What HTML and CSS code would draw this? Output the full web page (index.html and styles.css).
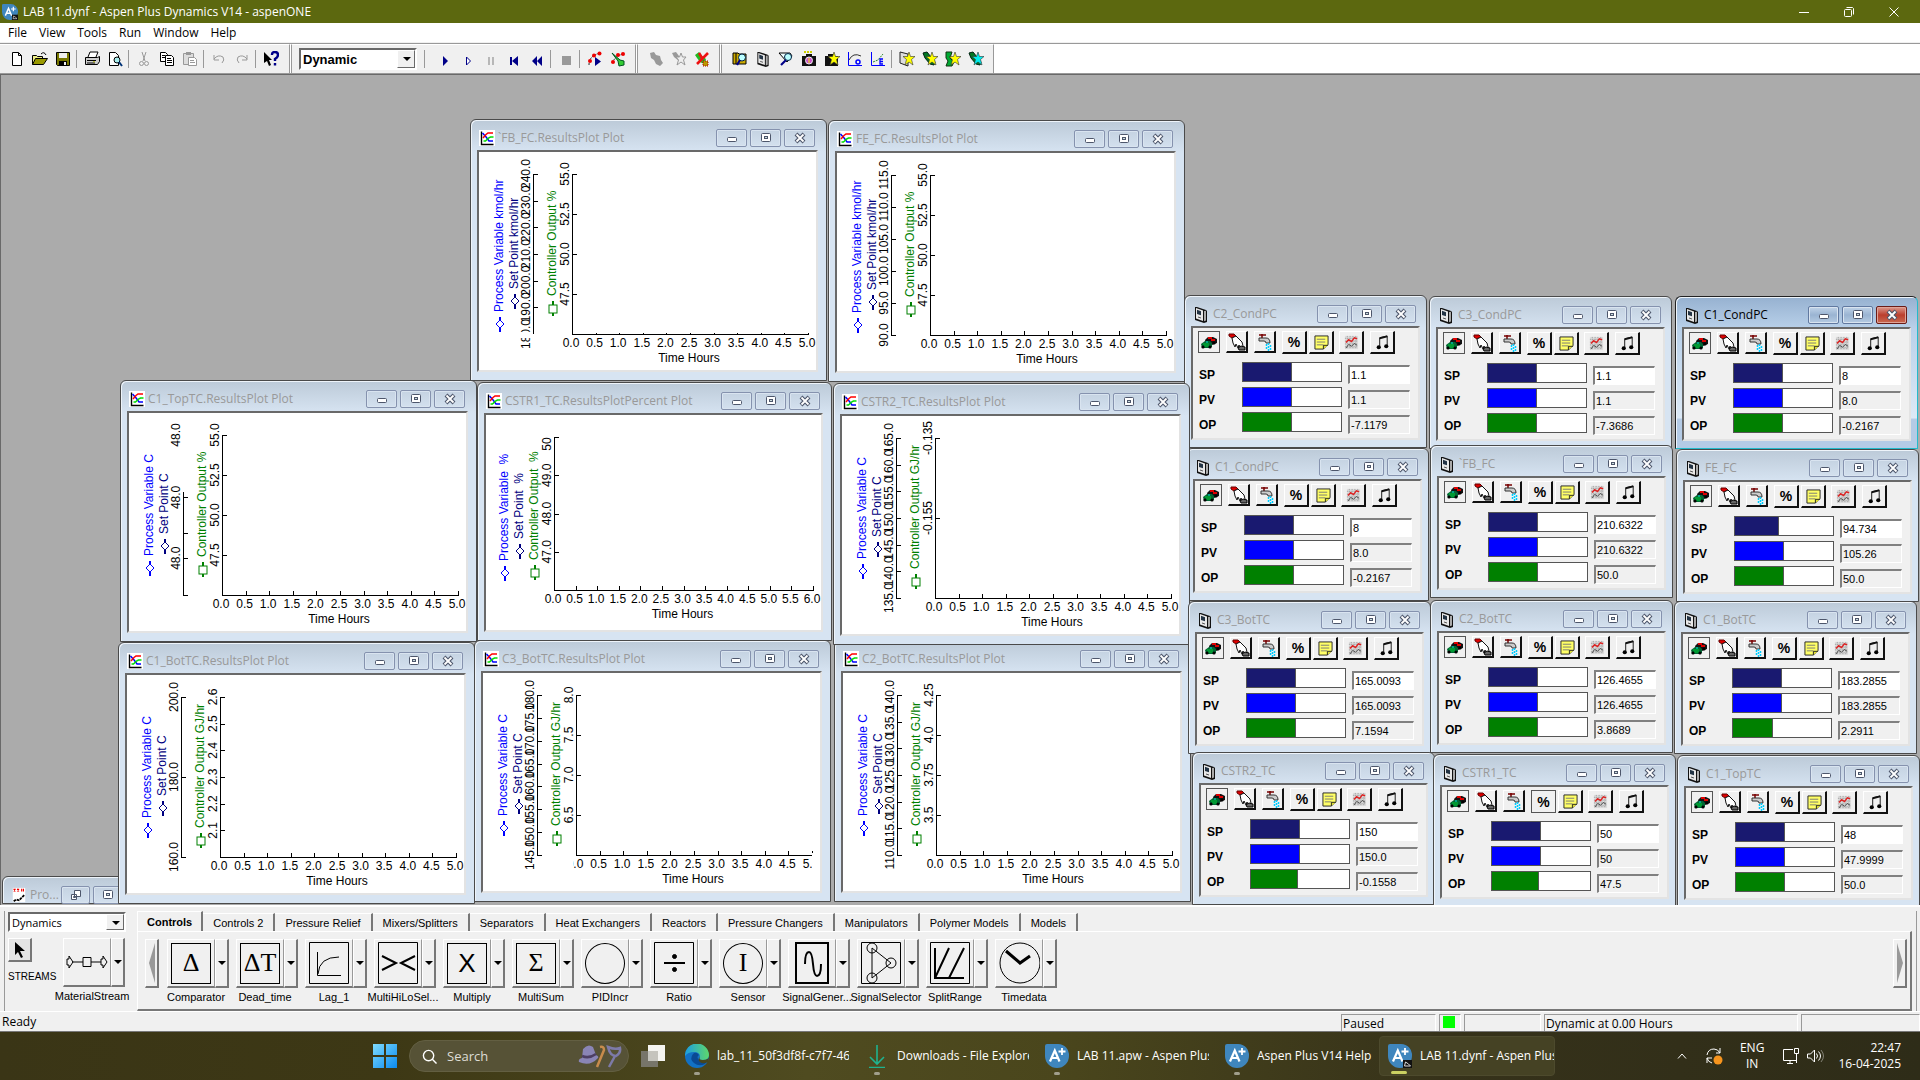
FILE: index.html
```html
<!DOCTYPE html>
<html lang="en">
<head>
<meta charset="utf-8">
<title>LAB 11.dynf - Aspen Plus Dynamics V14 - aspenONE</title>
<link rel="stylesheet" href="styles.css">
</head>
<body>
<svg class="defs" aria-hidden="true">
  <symbol id="aspen" viewBox="0 0 24 24"><path d="M2 0h11a11 11 0 0 1 11 12a12 12 0 0 1-12 12A12 12 0 0 1 0 12V2a2 2 0 0 1 2-2z" fill="#3f86bd"/><path d="M5 17.500L9.800 6.500L14.500 17.500M6.800 14h6" fill="none" stroke="#fff" stroke-width="2.200"/><path d="M17 4v7M13.500 7.500h7" stroke="#fff" stroke-width="1.800"/></symbol>
  <symbol id="aspen-dyn" viewBox="0 0 24 24"><use href="#aspen"/><path d="M15 16h9v8h-9z" fill="#111"/><path d="M16.500 22l1-4 3 2 2 2z" fill="#111" stroke="#ddd"/></symbol>
  <symbol id="plot" viewBox="0 0 16 16"><path d="M0 0h16v16H0z" fill="#fff"/><path d="M2.500 1.500v13H14.500" fill="none" stroke="#000" stroke-width="1.400"/><path d="M3.500 3l4 4.500 2.500 3.500h4" fill="none" stroke="#00f" stroke-width="1.500"/><path d="M4 8l3-3.500 2-1.500h5" fill="none" stroke="#f00" stroke-width="1.500"/><path d="M4.500 11h2l3-3 2-1h3" fill="none" stroke="#0d0" stroke-width="1.500"/></symbol>
  <symbol id="face" viewBox="0 0 14 17"><path d="M1 1h2l9 3 1 1v11l-3 1-9-3z" fill="#111"/><path d="M2 2l7 2.500V15L2 12.500z" fill="#e8e8e8"/><path d="M10 5l2-.3V14.500l-2 .8z" fill="#aaa"/><path d="M3 3.800l4 1.400v4L3 8z" fill="#234"/><path d="M4 11l3 1" stroke="#555"/></symbol>
  <symbol id="text" viewBox="0 0 16 18"><path d="M1 1h14v16H1z" fill="#fff"/><path d="M2 2l2 3M4 2L2 5M6 2l2 3M8 2L6 5M11 2v3M13 2v3" stroke="#e00" stroke-width="1.300"/><path d="M2 16l3-2 3 1 6-6" fill="none" stroke="#000" stroke-width="2" stroke-dasharray="3 1"/></symbol>
  <symbol id="min" viewBox="0 0 12 12"><rect x="1.500" y="5.500" width="9" height="4" rx="1" fill="#fff" stroke="#4d566b"/></symbol>
  <symbol id="max" viewBox="0 0 12 12"><rect x="1.500" y="1.500" width="9" height="8" rx="1" fill="#fff" stroke="#4d566b"/><rect x="4.500" y="4.500" width="3" height="2" fill="#cdd" stroke="#4d566b"/></symbol>
  <symbol id="close" viewBox="0 0 12 12"><path d="M2 2l8 8M10 2l-8 8" stroke="#4d566b" stroke-width="4"/><path d="M2.500 2.500l7 7M9.500 2.500l-7 7" stroke="#fff" stroke-width="1.800"/></symbol>
  <symbol id="restore" viewBox="0 0 12 12"><path d="M4.500 1.500h6v6h-6zM1.500 5.500h5v5h-5z" fill="#fff" stroke="#4d566b"/><path d="M3.500 7.500h2v1h-2z" stroke="#4d566b" fill="none"/></symbol>

  <symbol id="car" viewBox="0 0 18 14"><path d="M5 5l3-3h5l4 2v4l-5 2-6-1z" fill="#111"/><path d="M8 3h4M11 5h4" stroke="#d00" stroke-width="2"/><path d="M1 9l4-3h5l2 2v4l-3 1H2z" fill="#063"/><path d="M3 9h6M4 11h5" stroke="#0a3" stroke-width="1.500"/><circle cx="3" cy="12" r="1.600"/><circle cx="10" cy="12" r="1.600"/><circle cx="14" cy="8" r="1.600"/><path d="M6 7h2" stroke="#0dd"/></symbol>
  <symbol id="hand" viewBox="0 0 18 18"><path d="M1 1h5l2 2-4 2-3-2z" fill="#d00" stroke="#600"/><path d="M4 5l4-2 6 6 1 4-2 3-2-4-1 3-2-4-1 3-2-4z" fill="#fff" stroke="#111"/><path d="M10 15l3-2 4 1v3h-6z" fill="#666" stroke="#000"/></symbol>
  <symbol id="tap" viewBox="0 0 18 18"><path d="M3 2h7M6 1v4" stroke="#700" stroke-width="1.500"/><path d="M3 5h7q4 0 4 5h-4q0-2-2-2H3z" fill="#ccc" stroke="#333"/><path d="M10.500 11v6M12.500 10v8M14.500 12v5" stroke="#0cf" stroke-width="1.500" stroke-dasharray="2 1"/></symbol>
  <symbol id="note" viewBox="0 0 16 16"><path d="M1 1h14v9l-5 5H1z" fill="#ff6" stroke="#222"/><path d="M3 4.500h9M3 7.500h9M3 10.500h7" stroke="#777"/><path d="M10 15v-4h5" fill="#dd3" stroke="#222"/></symbol>
  <symbol id="trend" viewBox="0 0 16 16"><path d="M1 1h14v14H1z" fill="#ddd"/><path d="M1 3.500h14M1 6.500h14M1 9.500h14M1 12.500h14M3.500 1v14M6.500 1v14M9.500 1v14M12.500 1v14" stroke="#999" stroke-dasharray="1 1"/><path d="M2 8l3-3 3 2 3-4 3 1" fill="none" stroke="#d22" stroke-width="1.500"/><path d="M2 14l3-4 3 2 3-3 3 2" fill="none" stroke="#444"/></symbol>
  <symbol id="music" viewBox="0 0 14 16"><path d="M4 13V3l8-2v11" fill="none" stroke="#111"/><path d="M4 3.500l8-2" stroke="#111" stroke-width="2"/><circle cx="3" cy="13" r="2.200"/><circle cx="11" cy="12" r="2.200"/></symbol>

  <symbol id="t-new" viewBox="0 0 16 16"><path d="M3.500 1.500h6l3 3v10h-9zM9.500 1.500v3h3" fill="#fff" stroke="#000"/></symbol>
  <symbol id="t-open" viewBox="0 0 16 16"><path d="M.5 13.500v-9h4l1 1h5v2" fill="#ee8" stroke="#000"/><path d="M.5 13.500l3-6h12l-4 6z" fill="#990" stroke="#000"/><path d="M9 3q3-3 5 1" fill="none" stroke="#000"/></symbol>
  <symbol id="t-save" viewBox="0 0 16 16"><path d="M1.500 1.500h13v13h-12l-1-1z" fill="#770" stroke="#000"/><path d="M4 2h8v5H4z" fill="#eee"/><path d="M4 10h8v4H4z" fill="#000"/><path d="M9 11h2v3H9z" fill="#eee"/></symbol>
  <symbol id="t-print" viewBox="0 0 16 16"><path d="M4 6l2-5h8l-2 5" fill="#fff" stroke="#000"/><path d="M1.500 6.500h12l2-1v5l-2 3h-12z" fill="#ccc" stroke="#000"/><path d="M3 9.500h9M3 12h8" stroke="#000"/><path d="M9 10.800h2" stroke="#aa0"/></symbol>
  <symbol id="t-preview" viewBox="0 0 16 16"><path d="M2.500 1.500h6l3 3v10h-9z" fill="#fff" stroke="#000"/><circle cx="10" cy="9" r="3" fill="#aee" stroke="#000"/><path d="M12 11l3 4" stroke="#037" stroke-width="2"/></symbol>
  <symbol id="t-cut" viewBox="0 0 16 16"><path d="M6 1l3 9M10 1L7 10" stroke="#999" fill="none"/><circle cx="5.500" cy="12.500" r="2" fill="none" stroke="#999"/><circle cx="10.500" cy="12.500" r="2" fill="none" stroke="#999"/></symbol>
  <symbol id="t-copy" viewBox="0 0 16 16"><path d="M1.500 1.500h5l2 2v7h-7z" fill="#fff" stroke="#000"/><path d="M6.500 4.500h6l2 2v8h-8z" fill="#fff" stroke="#000"/><path d="M3 4.500h3M3 6.500h3M8 7.500h4M8 9.500h5M8 11.500h5" stroke="#000"/></symbol>
  <symbol id="t-paste" viewBox="0 0 16 16"><path d="M1.500 2.500h10v11h-10z" fill="#ddd" stroke="#999"/><path d="M4 1h5v3H4z" fill="#999"/><path d="M6.500 6.500h6l2 2v6h-8z" fill="#fff" stroke="#999"/><path d="M8 9.500h4M8 11.500h5" stroke="#999"/></symbol>
  <symbol id="t-undo" viewBox="0 0 16 16"><path d="M3 4v5h5M3 8q4-5 9-2 2 3-1 6" fill="none" stroke="#999"/></symbol>
  <symbol id="t-redo" viewBox="0 0 16 16"><path d="M13 4v5H8M13 8Q9 3 4 6q-2 3 1 6" fill="none" stroke="#999"/></symbol>
  <symbol id="t-help" viewBox="0 0 16 16"><path d="M1 1v11l3-2 2 5 2-1-2-5h3z"/><path d="M9 4q0-3 3-3t3 3q0 2-3 4v2M12 12v2.500" fill="none" stroke="#008" stroke-width="2.400"/></symbol>
  <symbol id="t-play" viewBox="0 0 16 16"><path d="M6 5l5 5-5 5z" fill="#008"/></symbol>
  <symbol id="t-step" viewBox="0 0 16 16"><path d="M6.500 6l4 4-4 4z" fill="#fff" stroke="#008"/></symbol>
  <symbol id="t-pause" viewBox="0 0 16 16"><path d="M6 6v8M10 6v8" stroke="#aaa" stroke-width="1.600"/></symbol>
  <symbol id="t-first" viewBox="0 0 16 16"><path d="M4 6h2v8H4zM12 5v10L6 10z" fill="#008"/></symbol>
  <symbol id="t-rew" viewBox="0 0 16 16"><path d="M8 5v10L3 10zM13 5v10L8 10z" fill="#008"/></symbol>
  <symbol id="t-stop" viewBox="0 0 16 16"><path d="M4 5h9v9H4z" fill="#999"/></symbol>
  <symbol id="t-run" viewBox="0 0 16 16"><path d="M2 14Q2 4 14 2" fill="none" stroke="#222" stroke-dasharray="2 1"/><g fill="#e00"><circle cx="3" cy="10" r="2"/><circle cx="7" cy="4.500" r="2"/><circle cx="12.500" cy="2.500" r="2"/></g><path d="M8 6l6 4.500L8 15z" fill="#008"/></symbol>
  <symbol id="t-run2" viewBox="0 0 16 16"><path d="M2 12Q6 4 14 3" fill="none" stroke="#222" stroke-dasharray="2 1"/><g fill="#e00"><circle cx="3" cy="11" r="2"/><circle cx="8" cy="4" r="2"/><circle cx="13" cy="3" r="2"/></g><path d="M2 2l6 8 1 5 5-1v-4l-4-1z" fill="#3c3" stroke="#052"/></symbol>
  <symbol id="t-block" viewBox="0 0 16 16"><path d="M2 2l4-1 2 3 4 1 1 4 2 3-3 3-4-2-2-4-3-2z" fill="#999"/></symbol>
  <symbol id="t-blockstar" viewBox="0 0 16 16"><path d="M1 2l4-1 3 4 0 5-5-4z" fill="#999"/><path d="M10 2l1.500 4H15l-2.500 3 1.500 5-4-3-4 3 1.500-5L5 6h3.500z" fill="#eee" stroke="#999"/></symbol>
  <symbol id="t-blockx" viewBox="0 0 16 16"><path d="M1 4l4-3 3 4 4 3-2 5-4-2-3-4z" fill="#2b2"/><path d="M9 10h5v5H9z" fill="#b90" stroke="#a00" stroke-dasharray="1 1"/><path d="M14 2L3 13M5 2l3 5" stroke="#e11" stroke-width="2.600"/></symbol>
  <symbol id="t-explore" viewBox="0 0 16 16"><path d="M1 2h5l1 1h7v10H1z" fill="#ca0" stroke="#000"/><path d="M4 2v11" stroke="#000"/><circle cx="10" cy="6.500" r="3.500" fill="#bff" stroke="#024"/><path d="M8 9l-3 5" stroke="#008" stroke-width="2.200"/></symbol>
  <symbol id="t-find" viewBox="0 0 16 16"><path d="M1 2l11 0 2 3-5 6z" fill="#eff" stroke="#000"/><circle cx="10" cy="6" r="3.500" fill="#bff" stroke="#024"/><path d="M8 9l-5 5" stroke="#008" stroke-width="2.200"/></symbol>
  <symbol id="t-cam" viewBox="0 0 16 16"><path d="M3 1h9" stroke="#cc0" stroke-width="2" stroke-dasharray="2 1"/><path d="M5 3h6v2h4v10H1V5h4z" fill="#111"/><circle cx="8" cy="9.500" r="3.500" fill="#c5c" stroke="#eee"/><path d="M8 7v5" stroke="#ee0"/></symbol>
  <symbol id="t-star" viewBox="0 0 16 16"><path d="M10 1l1.500 4.500H16L12.500 8.500 14 14l-4-3-4 3 1.500-5.500L4 5.500h4.500z" stroke="#333" stroke-width=".6"/></symbol>
  <symbol id="t-camstar" viewBox="0 0 16 16"><path d="M4 3h6v2h4v10H1V5h3z" fill="#111"/><use href="#t-star" fill="#ff0"/></symbol>
  <symbol id="t-gq" viewBox="0 0 16 16"><path d="M1.500 1v13.500H15" fill="none" stroke="#00f"/><path d="M2 9q4-8 12-4" fill="none" stroke="#333"/><circle cx="11" cy="11" r="2" fill="none" stroke="#00f" stroke-width="1.500"/></symbol>
  <symbol id="t-ge" viewBox="0 0 16 16"><path d="M1.500 1v13.500H15" fill="none" stroke="#00f"/><path d="M3 11l5-2 5-6" fill="none" stroke="#282" stroke-dasharray="2 1"/><path d="M13 8h-3v5h3M10 10.500h3" fill="none" stroke="#00f" stroke-width="1.300"/></symbol>
  <symbol id="t-facestar" viewBox="0 0 16 16"><path d="M1 1l8 2v12l-8-3z" fill="#ddd" stroke="#222"/><use href="#t-star" fill="#ff0"/></symbol>
  <symbol id="t-greenstar" viewBox="0 0 16 16"><path d="M1 2l4-1 4 5 4 5-1 3-4-1-5-6z" fill="#072" stroke="#021"/><use href="#t-star" fill="#ff0"/></symbol>
  <symbol id="t-greenstar2" viewBox="0 0 16 16"><path d="M1 1h6l-2 6 4 4-2 4H1l2-5-2-3z" fill="#0a3" stroke="#131"/><use href="#t-star" fill="#ff0"/></symbol>
  <symbol id="t-cyanstar" viewBox="0 0 16 16"><path d="M1 2l4-1 4 5 4 5-1 3-4-1-5-6z" fill="#072" stroke="#021"/><use href="#t-star" fill="#0ee"/></symbol>
</svg>

<header class="titlebar">
  <svg class="app-icon"><use href="#aspen-dyn"/></svg>
  <h1>LAB 11.dynf - Aspen Plus Dynamics V14 - aspenONE</h1>
  <button aria-label="Minimize"><svg viewBox="0 0 10 10"><path d="M0 5.500h10"/></svg></button>
  <button aria-label="Restore"><svg viewBox="0 0 10 10"><rect x=".5" y="2.500" width="7" height="7" rx="1"/><path d="M2.500.5h6l1 1v6"/></svg></button>
  <button aria-label="Close"><svg viewBox="0 0 10 10"><path d="M.5.5l9 9M9.500.5l-9 9"/></svg></button>
</header>

<nav class="menubar">
  <button>File</button><button>View</button><button>Tools</button><button>Run</button><button>Window</button><button>Help</button>
</nav>

<div class="toolbars">
  <div class="toolbar" data-icons="new open save | print preview | cut copy paste | undo redo | help"></div>
  <div class="toolbar">
    <span class="combo mode"><select aria-label="Run mode"><option>Dynamic</option></select></span>
    <i></i>
    <div class="toolset" data-icons="play step pause first rew | stop | run run2"></div>
  </div>
  <div class="toolbar" data-icons="block blockstar blockx"></div>
  <div class="toolbar" data-icons="explore face find cam camstar gq ge | facestar greenstar greenstar2 cyanstar"></div>
</div>

<main class="workspace" id="workspace"></main>

<section class="library">
  <div class="streams">
    <span class="combo"><select aria-label="Library"><option>Dynamics</option></select></span>
    <div class="stream-row">
      <div class="pointer">
        <button aria-label="Select"><svg viewBox="0 0 12 18"><path d="M1 1v13l3-3 3 6 2-1-3-6h5z"/></svg></button>
        <span>STREAMS</span>
      </div>
      <div class="model">
        <div class="model-btns"><button aria-label="MaterialStream"><svg viewBox="0 0 42 16"><path d="M1 5h2v-3l4 6-4 6v-3H1zM6 8h11M25 8h10M17 3.500h8v9h-8zM35 5h2V2l4 6-4 6v-3h-2z" fill="none" stroke="#000"/></svg></button><button class="drop" aria-label="MaterialStream types"></button></div>
        <span>MaterialStream</span>
      </div>
    </div>
  </div>
  <div class="palette">
    <div class="tabs" role="tablist">
      <button role="tab" aria-selected="true">Controls</button><button role="tab">Controls 2</button><button role="tab">Pressure Relief</button><button role="tab">Mixers/Splitters</button><button role="tab">Separators</button><button role="tab">Heat Exchangers</button><button role="tab">Reactors</button><button role="tab">Pressure Changers</button><button role="tab">Manipulators</button><button role="tab">Polymer Models</button><button role="tab">Models</button>
    </div>
    <div class="models">
      <button class="scroll" aria-label="Scroll left"><svg viewBox="0 0 6 40"><path d="M6 0v40L0 20z" fill="#999"/></svg></button>
      <div class="model-list" id="models"></div>
      <button class="scroll" aria-label="Scroll right"><svg viewBox="0 0 6 40"><path d="M0 0v40l6-20z" fill="#999"/></svg></button>
    </div>
  </div>
</section>

<footer class="statusbar">
  <span class="ready">Ready</span>
  <span class="cell paused">Paused</span>
  <span class="cell lamp"><b></b></span>
  <span class="cell blank"></span>
  <span class="cell time">Dynamic at 0.00 Hours</span>
  <span class="cell tail"></span>
</footer>

<div class="taskbar">
  <div class="apps">
    <button class="icon-only" aria-label="Start"><svg viewBox="0 0 24 24"><defs><linearGradient id="win" x2="1" y2="1"><stop stop-color="#7fdcff"/><stop offset="1" stop-color="#0a8af0"/></linearGradient></defs><path d="M0 0h11v11H0zM13 0h11v11H13zM0 13h11v11H0zM13 13h11v11H13z" fill="url(#win)"/></svg></button>
    <label class="search">
      <svg class="lens" viewBox="0 0 16 16"><circle cx="7" cy="7" r="5.500"/><path d="M11 11l4.500 4.500"/></svg>
      <input type="text" placeholder="Search">
      <svg class="art" viewBox="0 0 44 24"><path d="M1 18q-1-3 3-4L5 5q5-6 10-2l3 8q3 1 2 3-8 9-19 4z" fill="#8a85b5"/><path d="M4 12q7 3 14-2" stroke="#4d3f63" stroke-width="2.500" fill="none"/><path d="M19 23l7-17q0-4-4-3" fill="none" stroke="#c78b4c" stroke-width="2.500"/><path d="M30 3q7 3 12 1 1 5-4 8-6 0-8-9z" fill="none" stroke="#7d7aa8" stroke-width="2.500"/><path d="M37 12l-6 11" stroke="#7d7aa8" stroke-width="2.500"/></svg>
    </label>
    <button class="icon-only" aria-label="Task view"><svg viewBox="0 0 24 24"><path d="M7 1h17v16H7z" fill="#f4f4f0"/><path d="M0 7h17v16H0z" fill="#77756a"/><path d="M7 7h10v10H7z" fill="#c5c4bd"/></svg></button>
    <button class="app"><svg viewBox="0 0 24 24"><defs><linearGradient id="edge" x2="1"><stop stop-color="#1b9de2"/><stop offset="1" stop-color="#5fd86a"/></linearGradient></defs><circle cx="12" cy="12" r="12" fill="#1271c4"/><path d="M0 12A12 12 0 0 1 24 11q0 5-6 5-5 0-3-3 0-5-6-5T0 12z" fill="url(#edge)"/><path d="M8 10q-4 5 1 9 5 4 11 1l3-4q-5 3-9 0-3-3 0-5-3-4-6-1z" fill="#0a4a94"/><path d="M15 13q-2 3 3 3 6 0 6-4l-1 6q-6 3-9-1-1-3 1-4z" fill="#48461d"/></svg><span>lab_11_50f3df8f-c7f7-460</span></button>
    <button class="app"><svg viewBox="0 0 24 24"><path d="M12 1v18M5 13l7 7 7-7M4 23.500h16" fill="none" stroke="#1fb28f" stroke-width="1.600"/></svg><span>Downloads - File Explorer</span></button>
    <button class="app"><svg><use href="#aspen"/></svg><span>LAB 11.apw - Aspen Plus</span></button>
    <button class="app short"><svg><use href="#aspen"/></svg><span>Aspen Plus V14 Help</span></button>
    <button class="app current"><svg><use href="#aspen-dyn"/></svg><span>LAB 11.dynf - Aspen Plus</span></button>
  </div>
  <div class="tray">
    <svg class="chev" viewBox="0 0 10 10"><path d="M1 7.500l4-4.500 4 4.500"/></svg>
    <svg class="sync" viewBox="0 0 18 18"><path d="M2 8q1-6 7-6 4 0 6 4M15 1v5h-4M2 16v-5h5M2 11q1 4 5 5"/><circle cx="13" cy="13" r="4.500" class="dot"/></svg>
    <div class="lang">ENG<br>IN</div>
    <svg class="net" viewBox="0 0 18 18"><path d="M11 2.500H1.500v11h13V9M5 16.500h6M8 13.500v3M12.500 1.500h4v5h-4zM14.500 7v9"/></svg>
    <svg class="vol" viewBox="0 0 18 18"><path d="M1.500 7h3l4-4v12l-4-4h-3zM10.500 6.500q2 2.500 0 5M12.500 4.500q4 4.500 0 9"/><path d="M15 3q5 6 0 12" opacity=".4"/></svg>
    <time>22:47<br>16-04-2025</time>
  </div>
</div>
<script src="app.js"></script>
</body>
</html>
```
FILE: styles.css
```css
* { box-sizing: border-box; }
body {
  margin: 0;
  height: 100vh;
  display: flex;
  flex-direction: column;
  overflow: hidden;
  background: #f0f0f0;
  color: #000;
  font: 12px/16px "Open Sans", "Noto Sans", sans-serif;
}
button { font: inherit; color: inherit; background: none; border: 0; padding: 0; margin: 0; }
svg { display: block; flex: none; }
.defs { position: absolute; width: 0; height: 0; }

/* Application title and menu */
.titlebar { flex: none; height: 23px; display: flex; align-items: center; background: #5c680f; color: #fff; padding: 0 4px 0 2px; }
.titlebar h1 { flex: 1; margin: 0 0 0 5px; font-size: 12px; font-weight: 400; }
.app-icon { width: 16px; height: 16px; }
.titlebar button { width: 45px; height: 23px; display: grid; place-items: center; }
.titlebar button svg { width: 10px; height: 10px; fill: none; stroke: #fff; }
.menubar { flex: none; height: 20px; display: flex; padding-left: 2px; background: #fff; border-bottom: 1px solid #f0f0f0; }
.menubar button { padding: 0 6px; line-height: 20px; }

/* Toolbars */
.toolbars { flex: none; height: 31px; display: flex; background: #fff; border-top: 1px solid #999; border-bottom: 1px solid #999; }
.toolbar { display: flex; align-items: center; background: #f0f0f0; border-top: 1px solid #fff; border-right: 1px solid #999; padding: 0 7px 0 5px; }
.toolbar + .toolbar { border-left: 1px solid #999; margin-left: 1px; padding: 0 6px; }
.toolset { display: flex; align-items: center; }
.toolbar button { width: 23px; height: 22px; display: grid; place-items: center; }
.toolbar button svg { width: 16px; height: 16px; }
.toolbar i { width: 1px; height: 18px; margin: 0 3px 0 2px; background: #999; }
.toolbar .combo { width: 118px; height: 22px; margin: 0 5px 0 1px; }
.toolbar .combo + i { margin-right: 8px; }
.mode select { font-size: 13px; font-weight: 700; }
.combo { display: block; position: relative; border: 2px solid; border-color: #696969 #fff #fff #696969; background: #fff; }
.combo select { appearance: none; width: 100%; height: 100%; border: 0; padding: 0 16px 0 2px; background: none; color: #000; font-family: "Liberation Sans", Arial, sans-serif; }
.combo::after { content: ""; position: absolute; right: 0; top: 0; bottom: 0; width: 16px; pointer-events: none; background: #f0f0f0; border: 1px solid; border-color: #fff #696969 #696969 #fff; }
.combo::before { content: ""; position: absolute; z-index: 1; right: 4px; top: 7px; border: 4px solid transparent; border-top-color: #000; border-bottom: 0; pointer-events: none; }

/* MDI area and its child windows */
.workspace { flex: 1; position: relative; overflow: hidden; background: #ababab; border: solid #696969; border-width: 1px 0 0 1px; }
.win { position: absolute; width: 357px; height: 262px; display: flex; flex-direction: column; padding: 0 8px 8px 6px; border: 1px solid #4a4a4a; border-radius: 6px 6px 0 0; background: linear-gradient(#bccad8, #d7e4f2 32px); box-shadow: inset 1px 1px #eef4fa; color: #999; }
.win.percent { width: 355px; height: 259px; }
.win.plate { width: 243px; height: 153px; padding-right: 6px; padding-bottom: 7px; }
.win header { height: 30px; flex: none; display: flex; align-items: center; gap: 3px; padding: 6px 3px 0 2px; }
.win header > svg { width: 16px; height: 16px; }
.win h2 { flex: 1; margin: 0; font-size: 12px; font-weight: 400; white-space: nowrap; }
.win header button { width: 31px; height: 18px; display: grid; place-items: center; border: 1px solid #8592ae; border-radius: 2px; background: linear-gradient(#c5d3e2, #d3e0ee); box-shadow: inset 0 0 0 1px #d9e4f0; }
.win header button svg { width: 12px; height: 12px; }
.win.plate header { padding-right: 4px; }
.win.plate header > svg { margin-right: 1px; height: 17px; }
.client { flex: 1; min-height: 0; border: 2px solid; border-color: #696969 #e3e3e3 #e3e3e3 #696969; background: #fff; }
.client > svg { width: 100%; height: 100%; overflow: hidden; }
.win.active { background: linear-gradient(#96b1d0, #b9d1ea 32px, #dce9f6 80%, #b4cbe6 81%); border-color: #222 #2bc #2bc #222; color: #000; }
.win.active header button { border-color: #6179a0; background: linear-gradient(#c0d3e8, #9ab4d2 50%, #b5cbe2); }
.win.active header button:last-child { border-color: #6b1c17; background: linear-gradient(#dc9a8e, #bb3f2e 50%, #c86a52); box-shadow: inset 0 0 0 1px #e0a498; }
.win.icon { width: 160px; height: 28px; padding-right: 4px; }
.win.icon h2 { flex: none; width: 28px; }

/* Plot drawing */
.plot { font: 12px "Liberation Sans", Arial, sans-serif; text-anchor: middle; fill: #000; }
.plot .axis { fill: none; stroke: #000; shape-rendering: crispEdges; }
.plot .label { text-anchor: start; }
.pv { fill: #00f; stroke: #00f; }
.sp { fill: #000080; stroke: #000080; }
.op { fill: #008000; stroke: #008000; }
.plot text { stroke: none; }
.plot .mark { fill: #fff; }

/* Controller faceplates */
.plate .client { background: #f0f0f0; color: #000; padding: 3px 5px; font: 11px/16px "Liberation Sans", Arial, sans-serif; }
.plate-tools { display: grid; grid-template-columns: 28px 28px 28px 27px 30px 31px 26px; height: 31px; align-items: start; }
.plate-tools button { width: 22px; height: 22px; display: grid; place-items: center; border: solid; border-width: 1px 2px 2px 1px; border-color: #fff #111 #111 #fff; font: 700 14px/16px "Liberation Sans", Arial, sans-serif; }
.plate-tools button:nth-child(n+4) { width: 25px; height: 23px; }
.plate-tools button[aria-pressed="true"] { border: 1px solid #555; }
.plate-tools svg { width: 18px; height: 18px; }
.plate-tools button:nth-child(n+5) svg { width: 15px; height: 15px; }
.loop { display: grid; grid-template-columns: 44px 100px 62px; height: 25px; align-items: start; }
.loop label { padding: 5px 0 0 1px; font-size: 12px; font-weight: 700; }
.loop .bar { height: 20px; border: 1px solid #555; background: #fff; }
.loop .bar b { display: block; height: 100%; border-right: 1px solid #555; }
.loop input { width: 62px; height: 19px; margin: 3px 0 0 6px; border: solid; border-width: 2px 1px 1px 2px; border-color: #808080 #fff #fff #808080; padding: 0 1px; background: #fff; color: #000; font: inherit; border-radius: 0; }
.loop input:read-only { background: #f0f0f0; }
.fill-sp { background: #191970; }
.fill-pv { background: #00f; }
.fill-op { background: #008000; }

/* Model library */
.library { flex: none; height: 107px; display: flex; border-top: 2px solid #fff; padding: 4px 3px 0 4px; font: 11px/14px "Liberation Sans", Arial, sans-serif; border-bottom: 1px solid #fff; }
.library::after { content: ""; width: 4px; border-right: 1px solid #999; }
.streams { width: 133px; border-left: 1px solid #999; padding: 1px 8px 0 3px; }
.streams .combo { height: 20px; width: 118px; }
.streams select { font-family: "Open Sans", sans-serif; font-size: 11px; }
.stream-row { display: flex; gap: 21px; padding-top: 6px; }
.pointer { width: 34px; font-size: 10px; }
.pointer button { display: grid; place-items: center; width: 24px; height: 24px; margin-bottom: 8px; background: #e4e4e4; border: solid; border-width: 1px 2px 2px 1px; border-color: #fff #777 #777 #fff; }
.pointer button svg { width: 12px; height: 18px; }
.model { width: 62px; display: flex; flex-direction: column; align-items: center; gap: 2px; white-space: nowrap; }
.model > span { padding-right: 4px; }
.model-btns { display: flex; }
.model button { height: 49px; width: 48px; display: grid; place-items: center; border: solid; border-width: 1px 1px 2px 1px; border-color: #fff #999 #777 #fff; }
.model button svg { width: 42px; height: 42px; }
.model button.drop { width: 14px; border-right: 2px solid #777; }
.drop::before { content: ""; border: 4px solid transparent; border-top-color: #000; border-bottom: 0; }
.palette { flex: 1; min-width: 0; display: flex; flex-direction: column; }
.tabs { display: flex; align-items: flex-end; height: 20px; }
.tabs button { height: 18px; padding: 0 10px; border-right: 2px solid #777; border-top: 1px solid #fff; white-space: nowrap; }
.tabs button[aria-selected="true"] { height: 20px; font-weight: 700; padding: 0 9px; border-left: 1px solid #fff; }
.models { flex: 1; display: flex; align-items: flex-start; padding: 7px 3px 0 7px; border: 1px solid; border-color: #fff #777 #777 #fff; border-width: 1px 2px 2px 1px; }
.scroll { flex: none; width: 14px; height: 49px; display: grid; place-items: center; border: solid; border-width: 1px 2px 2px 1px; border-color: #fff #777 #777 #fff; }
.scroll svg { width: 6px; height: 40px; }
.model-list { flex: 1; display: flex; gap: 7px; padding-left: 8px; }
.glyph { width: 40px; height: 41px; border: 1px solid #000; display: grid; place-items: center; font: 26px/38px "Liberation Serif", serif; }
.glyph.sans { font-family: "Liberation Sans", sans-serif; }
.glyph.round { border-radius: 50%; }

/* Status bar */
.statusbar { flex: none; height: 20px; display: flex; align-items: flex-end; gap: 3px; line-height: 18px; border-bottom: 1px solid #777; }
.ready { flex: 1; padding-left: 2px; }
.cell { height: 17px; border-left: 1px solid #999; border-top: 1px solid #999; border-right: 1px solid #fff; padding-left: 1px; }
.paused { width: 95px; }
.lamp { width: 22px; padding: 1px 3px; }
.lamp b { display: block; width: 12px; height: 12px; background: #0f0; }
.blank { width: 77px; }
.time { width: 254px; }
.tail { width: 119px; }

/* Taskbar */
.taskbar { flex: none; height: 48px; display: grid; grid-template-columns: 1fr auto 1fr; align-items: center; color: #fff; background: linear-gradient(90deg, #3a3516, #3d3815 20%, #4f4b20 42%, #4a461c 55%, #36321a 75%, #2e2c18); }
.apps { grid-column: 2; display: flex; gap: 4px; align-items: center; }
.icon-only { width: 40px; height: 40px; display: grid; place-items: center; }
.apps button svg { width: 24px; height: 24px; }
.search { width: 220px; height: 32px; display: flex; align-items: center; gap: 10px; padding: 0 6px 0 12px; border-radius: 16px; border: 1px solid #635f42; background: #565236; }
.search input { flex: 1; min-width: 0; border: 0; padding: 0; background: none; color: #fff; font: 13px/16px "Open Sans", sans-serif; }
.search input::placeholder { color: #deddd5; opacity: 1; }
.lens { width: 15px; height: 15px; fill: none; stroke: #fff; stroke-width: 1.5px; }
.art { width: 44px; height: 24px; }
.app { position: relative; width: 176px; height: 40px; display: flex; align-items: center; gap: 8px; padding: 0 4px 0 8px; border-radius: 4px; text-align: left; }
.app.short { width: 158px; padding-right: 0; }
.app span { flex: 1; overflow: hidden; white-space: nowrap; }
.app::after { content: ""; position: absolute; left: 17px; bottom: 1px; width: 6px; height: 3px; border-radius: 2px; background: #a19f8c; }
.app.current { background: #454224; border: 1px solid #4d4a2d; padding-right: 0; }
.app.current::after { left: 11px; width: 16px; background: #cbd062; }
.tray { justify-self: end; display: flex; align-items: center; padding-right: 19px; text-align: right; }
.tray svg { fill: none; stroke: #fff; }
.chev { width: 10px; height: 10px; margin-right: 18px; }
.sync { width: 18px; height: 18px; margin-right: 17px; }
.sync .dot { fill: #f7941d; stroke: none; }
.lang { text-align: center; margin-right: 18px; }
.net { width: 18px; height: 18px; margin-right: 6px; }
.vol { width: 18px; height: 18px; margin-right: 14px; }
```
FILE: app.js
```js
// Toolbar buttons are listed by icon name; "|" is a separator.
document.querySelectorAll('[data-icons]').forEach(bar => {
  bar.innerHTML = bar.dataset.icons.split(' ').map(n => n === '|' ? '<i></i>'
    : `<button aria-label="${n}"><svg><use href="#${n === 'face' ? 'face' : 't-' + n}"/></svg></button>`).join('');
});

// Window positions are stored in screen units; the desktop starts at (1, 75).
const DESK_X = 1, DESK_Y = 75;
const frame = (o, icon, kind, body, first = 'min') => `
  <section class="win ${kind}" style="left:${o.x - DESK_X}px;top:${o.y - DESK_Y}px">
    <header><svg><use href="#${icon}"/></svg><h2>${o.title}</h2>
      <button aria-label="Minimize"><svg><use href="#${first}"/></svg></button>
      <button aria-label="Maximize"><svg><use href="#max"/></svg></button>
      <button aria-label="Close"><svg><use href="#close"/></svg></button>
    </header>${body}</section>`;

// Plot geometry, measured from the window's top left corner.
const TOP = 55, BOTTOM = 215;
const vtext = (x, y, s, cls = '') => `<text class="${cls}" transform="translate(${x} ${y}) rotate(-90)" y="4">${s}</text>`;

function series(cls, x, start, name) {
  const m = start + 12;
  const mark = cls === 'op'
    ? `<rect class="mark" x="${x - 3}" y="${m - 3}" width="8" height="8"/>`
    : `<path class="mark" d="M${x + 1} ${m - 4}l4 4-4 4-4-4z"/>`;
  return `<g class="${cls}"><path d="M${x + 1} ${m - 7}v15" stroke-width="2"/>${mark}${vtext(x, start, name, 'label')}</g>`;
}

function vaxis(x, labels, ticks, top, bottom, from = top) {
  let s = `<path class="axis" d="M${x + .5} ${from}V${bottom}${ticks.map(t => `M${x} ${Math.round(top + t * (bottom - top)) + .5}h5`).join('')}"/>`;
  labels.forEach(([t, l]) => { s += vtext(x - 7, top + t * (bottom - top), l); });
  return s;
}

function xaxis(x0, x1, y, n, tick) {
  let d = `M${x0} ${y + .5}H${x1 + 1}`, t = '';
  for (let i = 0; i <= n; i++) {
    const x = x0 + (x1 - x0) * i / n;
    if (i) d += `M${Math.round(x) + .5} ${y}v-${tick}`;
    t += `<text x="${x - 1}" y="${y + 13}">${(i / 2).toFixed(1)}</text>`;
  }
  return `<path class="axis" d="${d}"/>${t}<text x="${(x0 + x1) / 2 - 1}" y="${y + 28}">Time Hours</text>`;
}

const even = (list, n = list.length - 1) => list.map((l, i) => [i / n, l]);

function plot(o) {
  const c = o.narrow;
  const bottom = c ? 208 : BOTTOM;
  const ax = c ? 77 : 102;
  const left = o.left || [];
  let g = series('pv', c ? 27 : 29, o.starts[0], 'Process Variable ' + o.unit)
    + series('sp', c ? 42 : 44, o.starts[1], 'Set Point ' + o.unit)
    + series('op', c ? 57 : 82, o.starts[2], 'Controller Output ' + o.out);
  if (left.length) g += vaxis(63, left, o.leftTicks || left.map(l => l[0]), TOP, bottom, o.leftFrom);
  if (o.erase) g += '<rect x="48" y="213" width="15" height="6" fill="#fff"/>';
  g += vaxis(ax, o.right, o.rightTicks || o.right.map(r => r[0]), TOP, bottom);
  if (c) g += vtext(70, 62, '50');
  g += xaxis(ax, c ? 336 : 338, bottom, c ? 12 : 10, o.tick || 4);
  if (o.cut) g += `<rect x="90" y="217" width="9" height="14" fill="#fff"/><rect x="338" y="213" width="12" height="18" fill="#fff"/>`;
  return frame(o, 'plot', c ? 'percent' : '', `<div class="client"><svg class="plot"><g transform="translate(-9 -33)">${g}</g></svg></div>`);
}

const pct = even(['55.0', '52.5', '50.0', '47.5'], 4);
const plots = [
  { x: 118, y: 642, title: 'C1_BotTC.ResultsPlot Plot', unit: 'C', out: 'GJ/hr', starts: [176, 154, 186], left: even(['200.0', '180.0', '160.0']), right: even(['2.6', '2.5', '2.4', '2.3', '2.2', '2.1'], 6) },
  { x: 474, y: 640, title: 'C3_BotTC.ResultsPlot Plot', unit: 'C', out: 'GJ/hr', starts: [176, 154, 186], left: even(['180.0', '175.0', '170.0', '165.0', '160.0', '155.0', '150.0', '145.0']), right: even(['8.0', '7.5', '7.0', '6.5'], 4), cut: true },
  { x: 834, y: 640, title: 'C2_BotTC.ResultsPlot Plot', unit: 'C', out: 'GJ/hr', starts: [176, 154, 186], left: even(['140.0', '135.0', '130.0', '125.0', '120.0', '115.0', '110.0']), right: even(['4.25', '4.0', '3.75', '3.5'], 4) },
  { x: 470, y: 119, title: '`FB_FC.ResultsPlot Plot', unit: 'kmol/hr', out: '%', starts: [193, 170, 177], left: even(['240.0', '230.0', '220.0', '210.0', '200.0', '190.0', '180.0']), leftTicks: [0, 1 / 6, 2 / 6, 3 / 6, 4 / 6, 5 / 6], right: pct, erase: true, tick: 1 },
  { x: 828, y: 120, title: 'FE_FC.ResultsPlot Plot', unit: 'kmol/hr', out: '%', starts: [193, 170, 177], left: even(['115.0', '110.0', '105.0', '100.0', '95.0', '90.0']), right: pct },
  { x: 120, y: 380, title: 'C1_TopTC.ResultsPlot Plot', unit: 'C', out: '%', starts: [176, 154, 177], left: [[0, '48.0'], [.39, '48.0'], [.77, '48.0']], leftTicks: [.39, .61, .77, 1], leftFrom: 112, right: pct },
  { x: 477, y: 382, title: 'CSTR1_TC.ResultsPlotPercent Plot', unit: '\u00a0%', out: '\u00a0%', starts: [179, 157, 178], narrow: true, right: [[.25, '49.0'], [.5, '48.0'], [.75, '47.0']], rightTicks: [0, .25, .5, .75] },
];
const cstr2 = { x: 833, y: 383, title: 'CSTR2_TC.ResultsPlot Plot', unit: 'C', out: 'GJ/hr', starts: [176, 154, 186], left: even(['165.0', '160.0', '155.0', '150.0', '145.0', '140.0', '135.0']), right: [[0, '-0.135'], [.5, '-0.155']] };

const tools = ['car', 'hand', 'tap', '%', 'note', 'trend', 'music'];
let uid = 0;
function plate(x, y, title, values, fills = [50, 50, 50], opts = {}) {
  const buttons = tools.map((t, i) => `<button aria-label="${t}" aria-pressed="${i === 0 || (i === 3 && !!opts.percent)}">${t === '%' ? '%' : `<svg><use href="#${t}"/></svg>`}</button>`).join('');
  const rows = ['SP', 'PV', 'OP'].map((n, i) => {
    const id = `${n}-${++uid}`;
    return `<div class="loop"><label for="${id}">${n}</label><div class="bar"><b class="fill-${n.toLowerCase()}" style="width:${fills[i]}%"></b></div><input id="${id}" type="text" value="${values[i]}"${i ? ' readonly' : ''}></div>`;
  }).join('');
  return frame({ x, y, title }, 'face', 'plate ' + (opts.active ? 'active' : ''), `<div class="client"><div class="plate-tools">${buttons}</div>${rows}</div>`);
}

const windows = [
  frame({ x: 2, y: 876, title: 'Pro...' }, 'text', 'icon', '', 'restore'),
  ...plots.map(plot),
  plate(1184, 295, 'C2_CondPC', ['1.1', '1.1', '-7.1179']),
  plate(1429, 296, 'C3_CondPC', ['1.1', '1.1', '-7.3686']),
  plate(1186, 448, 'C1_CondPC', ['8', '8.0', '-0.2167']),
  plot(cstr2),
  plate(1430, 445, '`FB_FC', ['210.6322', '210.6322', '50.0']),
  plate(1676, 449, 'FE_FC', ['94.734', '105.26', '50.0'], [45, 50, 50]),
  plate(1188, 601, 'C3_BotTC', ['165.0093', '165.0093', '7.1594']),
  plate(1430, 600, 'C2_BotTC', ['126.4655', '126.4655', '3.8689']),
  plate(1674, 601, 'C1_BotTC', ['183.2855', '183.2855', '2.2911'], [50, 50, 41]),
  plate(1192, 752, 'CSTR2_TC', ['150', '150.0', '-0.1558'], [50, 50, 48]),
  plate(1433, 754, 'CSTR1_TC', ['50', '50', '47.5'], [50, 50, 48], { percent: true }),
  plate(1677, 755, 'C1_TopTC', ['48', '47.9999', '50.0']),
  plate(1675, 296, 'C1_CondPC', ['8', '8.0', '-0.2167'], undefined, { active: true }),
];
document.getElementById('workspace').innerHTML = windows.join('');

const svg = (d, w = 1) => `<svg viewBox="0 0 42 42"><g fill="none" stroke="#000" stroke-width="${w}">${d}</g></svg>`;
const box = '<path d="M1.500.5h39v41h-39z" stroke-width="1"/>';
const models = [
  ['Comparator', '<span class="glyph">Δ</span>'],
  ['Dead_time', '<span class="glyph">ΔT</span>'],
  ['Lag_1', svg(box + '<path d="M9.500 10v23.500H33M10 32Q11 15 31 15"/>')],
  ['MultiHiLoSel...', svg(box + '<path d="M5 14l14 7-14 7M38 14l-14 7 14 7" stroke-width="2"/>')],
  ['Multiply', '<span class="glyph sans">X</span>'],
  ['MultiSum', '<span class="glyph">Σ</span>'],
  ['PIDIncr', '<span class="glyph round"></span>'],
  ['Ratio', svg(box + '<path d="M11 21h21" stroke-width="2"/><circle cx="21.500" cy="14.500" r="2" fill="#000"/><circle cx="21.500" cy="27.500" r="2" fill="#000"/>')],
  ['Sensor', '<span class="glyph round">I</span>'],
  ['SignalGener...', svg('<path d="M5 1h32v40H5z" stroke-width="2"/><path d="M14 22q0-12 4-12 3 0 4 12t4 12q4 0 4-12" stroke-width="2"/>')],
  ['SignalSelector', svg(box + '<circle cx="12" cy="6" r="5"/><circle cx="12" cy="36" r="5"/><circle cx="31" cy="21" r="5"/><path d="M12 6v30L31 21z"/>')],
  ['SplitRange', svg(box + '<path d="M6 6v30h29M6 36L20 6M20 36L35 6" stroke-width="2"/>')],
  ['Timedata', svg('<circle cx="22" cy="21" r="20"/><path d="M8 9l14 12 10-7" stroke-width="3"/>')],
];
document.getElementById('models').innerHTML = models.map(([n, g]) =>
  `<div class="model"><div class="model-btns"><button aria-label="${n}">${g}</button><button class="drop" aria-label="${n} types"></button></div><span>${n}</span></div>`).join('');
```
